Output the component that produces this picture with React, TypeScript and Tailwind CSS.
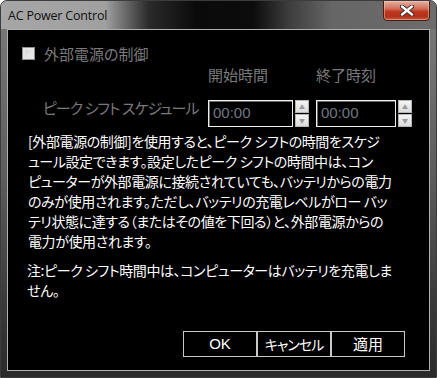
import React from "react"

const jp = "font-['Meiryo_UI','Noto_Sans_CJK_JP',sans-serif] [font-feature-settings:'palt']"

function Spinner() {
  return (
    <div className="ml-[2px] flex w-[14px] flex-col gap-[1px]">
      <div className="flex h-[13px] items-center justify-center border border-[#b5b5b5] bg-[linear-gradient(180deg,#f4f4f4,#dcdcdc)] text-[6px] leading-none text-[#9a9a9a]">
        ▲
      </div>
      <div className="flex h-[13px] items-center justify-center border border-[#b5b5b5] bg-[linear-gradient(180deg,#f4f4f4,#dcdcdc)] text-[6px] leading-none text-[#9a9a9a]">
        ▼
      </div>
    </div>
  )
}

function TimeBox({ width }: { width: string }) {
  return (
    <div className="flex">
      <div
        className={`${width} flex h-[27px] items-center border border-[#f0f0f0] bg-black pl-[4px] font-['Liberation_Sans',sans-serif] text-[15px] text-[#6f7880] shadow-[inset_1px_1px_0_#6a6a6a]`}
      >
        00:00
      </div>
      <Spinner />
    </div>
  )
}

export default function App() {
  const body = [
    "[外部電源の制御]を使用すると、ピーク シフトの時間をスケジ",
    "ュール設定できます。設定したピーク シフトの時間中は、コン",
    "ピューターが外部電源に接続されていても、バッテリからの電力",
    "のみが使用されます。ただし、バッテリの充電レベルがロー バッ",
    "テリ状態に達する（またはその値を下回る）と、外部電源からの",
    "電力が使用されます。",
  ]
  const note = ["注:ピーク シフト時間中は、コンピューターはバッテリを充電しま", "せん。"]

  return (
    <div className="flex h-[378px] w-[437px] flex-col overflow-hidden rounded-t-[7px] border border-[#3c3c3c] bg-[linear-gradient(180deg,#7c7c7c_0%,#5e5e5e_45%,#3a3a3a_80%,#2a2a2a_100%)]">
      {/* title bar */}
      <div className="relative flex h-[28px] shrink-0 items-center bg-[linear-gradient(90deg,#a6a6a6_0%,#a0a0a0_24%,#2a2a2a_34%,#0a0a0a_45%,#0c0c0c_58%,#3c3c3c_66%,#666666_76%,#6c6c6c_100%)]">
        <span className="ml-[7px] mt-[2px] font-['Open_Sans',sans-serif] text-[12.5px] tracking-[-0.2px] text-[#111]">
          AC Power Control
        </span>
        <div className="absolute right-[6px] top-[-1px] flex h-[21px] w-[47px] items-center justify-center rounded-b-[4px] border border-[#4a1c12] bg-[linear-gradient(180deg,#e3b2a4_0%,#d0705a_40%,#c0391f_55%,#b0301a_80%,#c85a40_100%)] shadow-[inset_0_0_0_1px_rgba(255,210,200,0.45)]">
          <svg width="14" height="11" viewBox="0 0 14 11">
            <path d="M2 1.5 L12 9.5 M12 1.5 L2 9.5" stroke="#3a2a28" strokeWidth="4.2" strokeLinecap="round" />
            <path d="M2 1.5 L12 9.5 M12 1.5 L2 9.5" stroke="#ffffff" strokeWidth="2.4" strokeLinecap="round" />
          </svg>
        </div>
      </div>

      {/* client area */}
      <div className="mx-[6px] mb-[6px] flex-1 border border-[#b0b0b0] bg-black">
        <div className={`${jp} flex flex-col`}>
          {/* checkbox row */}
          <div className="ml-[14px] mt-[17px] flex h-[13px] items-center">
            <div className="h-[13px] w-[13px] border border-[#8e8f8f] bg-[linear-gradient(135deg,#cfcfcf,#f4f4f4)] shadow-[inset_0_0_0_2px_#e6e6e6]" />
            <span className="ml-[9px] whitespace-nowrap text-[15px] leading-[20px] text-[#7a7a7a]">外部電源の制御</span>
          </div>

          {/* headers */}
          <div className="ml-[200px] mt-[5px] flex h-[20px] text-[15px] leading-[20px] text-[#7a7a7a]">
            <span className="w-[108px]">開始時間</span>
            <span>終了時刻</span>
          </div>

          {/* schedule row */}
          <div className="mt-[15px] flex h-[27px] items-start">
            <span className="ml-[35px] mt-[-2px] w-[165px] whitespace-nowrap text-[15px] leading-[20px] tracking-[-1px] text-[#7a7a7a]">
              ピーク シフト スケジュール
            </span>
            <div className="w-[108px]">
              <TimeBox width="w-[85px]" />
            </div>
            <TimeBox width="w-[80px]" />
          </div>

          {/* description */}
          <div className="ml-[20px] mt-[4px] text-[14px] leading-[20px] tracking-[-0.4px] text-white">
            {body.map((l, i) => (
              <div key={i} className="whitespace-nowrap">
                {l}
              </div>
            ))}
          </div>

          <div className="ml-[19px] mt-[9px] text-[14px] leading-[20px] tracking-[-0.4px] text-white">
            {note.map((l, i) => (
              <div key={i} className="whitespace-nowrap">
                {l}
              </div>
            ))}
          </div>

          {/* buttons */}
          <div className="mr-[24px] mt-[31px] flex justify-end">
            <button className="h-[26px] w-[74px] border border-[#c8c8c8] bg-black font-['Liberation_Sans',sans-serif] text-[15px] text-white">
              OK
            </button>
            <button className="h-[26px] w-[74px] border border-[#c8c8c8] bg-black text-[14px] tracking-[-1px] text-white">
              キャンセル
            </button>
            <button className="h-[26px] w-[74px] border border-[#c8c8c8] bg-black text-[15px] text-white">
              適用
            </button>
          </div>
        </div>
      </div>
    </div>
  )
}
